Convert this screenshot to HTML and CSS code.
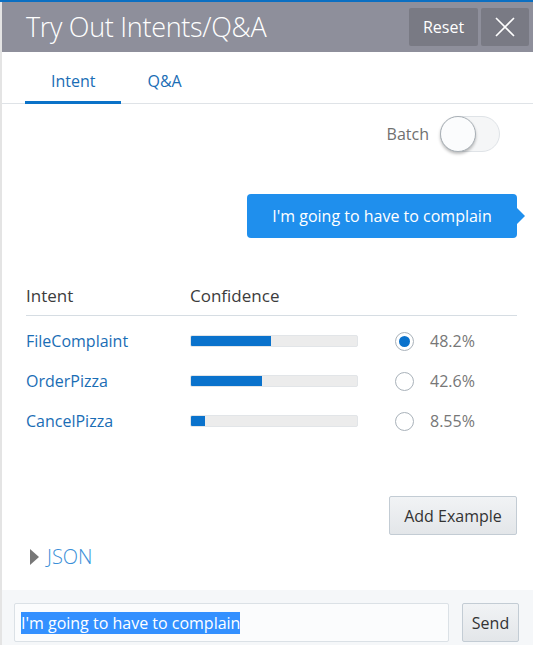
FILE: index.html
```html
<!DOCTYPE html>
<html>
<head>
<meta charset="utf-8">
<link rel="stylesheet" href="styles.css">
</head>
<body>
<div class="app">
  <div class="accent"></div>
  <div class="panel">
    <header class="header">
      <h1 class="title">Try Out Intents/Q&amp;A</h1>
      <div class="header-actions">
        <button class="hbtn reset">Reset</button>
        <button class="hbtn close" aria-label="Close">
          <svg width="22" height="22" viewBox="0 0 22 22"><path d="M2 2 L20 20 M20 2 L2 20" stroke="#fff" stroke-width="1.6" fill="none"/></svg>
        </button>
      </div>
    </header>
    <nav class="tabs">
      <div class="tab active">Intent</div>
      <div class="tab">Q&amp;A</div>
    </nav>
    <main class="content">
      <div class="batch-row">
        <span class="batch-label">Batch</span>
        <div class="toggle"><div class="knob"></div></div>
      </div>
      <div class="bubble-row">
        <div class="bubble">I'm going to have to complain</div>
      </div>
      <div class="table">
        <div class="thead">
          <div class="c-name">Intent</div>
          <div class="c-conf">Confidence</div>
        </div>
        <div class="trow">
          <div class="c-name link">FileComplaint</div>
          <div class="bar"><div class="fill" style="width:48.2%"></div></div>
          <div class="radio checked"></div>
          <div class="pct">48.2%</div>
        </div>
        <div class="trow">
          <div class="c-name link">OrderPizza</div>
          <div class="bar"><div class="fill" style="width:42.6%"></div></div>
          <div class="radio"></div>
          <div class="pct">42.6%</div>
        </div>
        <div class="trow">
          <div class="c-name link">CancelPizza</div>
          <div class="bar"><div class="fill" style="width:8.55%"></div></div>
          <div class="radio"></div>
          <div class="pct">8.55%</div>
        </div>
      </div>
      <div class="add-row">
        <button class="btn add">Add Example</button>
      </div>
      <div class="json">
        <span class="tri"></span>
        <span class="json-label">JSON</span>
      </div>
    </main>
    <footer class="footer">
      <div class="input"><span class="sel">I'm going to have to complain</span></div>
      <button class="btn send">Send</button>
    </footer>
  </div>
</div>
</body>
</html>
```
FILE: styles.css
```css
* { box-sizing: border-box; }
html, body { margin: 0; padding: 0; }
body {
  background: #e4e4e4;
  font-family: "Open Sans", "Noto Sans", sans-serif;
  color: #333;
}
.app {
  width: 533px;
  height: 645px;
  display: flex;
  flex-direction: column;
  overflow: hidden;
}
.accent { height: 2px; background: #0b6fc2; flex: none; }
.panel {
  margin-left: 2px;
  flex: 1;
  display: flex;
  flex-direction: column;
  background: #fff;
}
.header {
  height: 50px;
  background: #8e8f9b;
  display: flex;
  align-items: center;
  justify-content: space-between;
  padding: 0 4px 0 24px;
  flex: none;
}
.title {
  margin: 0 0 2px;
  font-weight: 300;
  font-size: 27px;
  color: #fff;
  letter-spacing: -0.3px;
}
.header-actions { display: flex; gap: 3px; align-self: flex-start; margin-top: 6px; }
.hbtn {
  height: 38px;
  border: none;
  border-radius: 2px;
  background: #797a84;
  color: #fff;
  font-family: inherit;
  font-size: 16px;
  padding: 0;
  display: flex;
  align-items: center;
  justify-content: center;
}
.reset { width: 69px; }
.close { width: 48px; }
.tabs {
  height: 52px;
  display: flex;
  padding-left: 23px;
  border-bottom: 1px solid #dfe3e7;
  flex: none;
}
.tab {
  padding: 0 26px;
  display: flex;
  align-items: center;
  padding-top: 8px;
  color: #1a6db5;
  font-size: 16px;
  border-bottom: 3px solid transparent;
  margin-bottom: -1px;
}
.tab.active { border-bottom-color: #0a72c8; }
.content {
  flex: 1;
  padding: 0 16px 0 24px;
  display: flex;
  flex-direction: column;
}
.batch-row {
  display: flex;
  justify-content: flex-end;
  align-items: center;
  gap: 11px;
  margin-top: 12px;
  padding-right: 17px;
}
.batch-label { color: #707070; font-size: 16px; }
.toggle {
  width: 60px;
  height: 36px;
  border-radius: 18px;
  background: #f5f6f7;
  border: 1px solid #dfe3e7;
  position: relative;
}
.knob {
  position: absolute;
  left: -1px;
  top: -1px;
  width: 36px;
  height: 36px;
  border-radius: 50%;
  background: #fbfcfd;
  border: 1px solid #a9b0b6;
  box-shadow: 0 2px 3px rgba(0,0,0,0.25);
}
.bubble-row {
  display: flex;
  justify-content: flex-end;
  margin-top: 42px;
}
.bubble {
  position: relative;
  background: #1f8fed;
  color: #fff;
  font-size: 16px;
  height: 44px;
  width: 270px;
  border-radius: 4px;
  display: flex;
  align-items: center;
  justify-content: center;
}
.bubble::after {
  content: "";
  position: absolute;
  right: -8px;
  top: 14px;
  border-left: 8px solid #1f8fed;
  border-top: 8px solid transparent;
  border-bottom: 8px solid transparent;
}
.table { margin-top: 42px; }
.thead {
  display: flex;
  height: 36px;
  align-items: flex-start;
  border-bottom: 1px solid #d6dde3;
  font-size: 17px;
  color: #3c3c3c;
  padding-top: 4px;
}
.c-name { width: 164px; flex: none; }
.trow {
  display: flex;
  align-items: center;
  height: 40px;
}
.thead + .trow { margin-top: 5px; }
.link { color: #1a6db5; font-size: 16px; }
.bar {
  width: 168px;
  height: 12px;
  background: #ececec;
  border: 1px solid #e2e5e8;
  border-radius: 2px;
  overflow: hidden;
  flex: none;
}
.fill { height: 100%; background: #0a72cc; }
.radio {
  width: 19px;
  height: 19px;
  border-radius: 50%;
  border: 1px solid #a9b2ba;
  background: #fff;
  margin-left: 37px;
  margin-right: 16px;
  flex: none;
  position: relative;
}
.radio.checked::after {
  content: "";
  position: absolute;
  left: 3px;
  top: 3px;
  width: 11px;
  height: 11px;
  border-radius: 50%;
  background: #0a72cc;
}
.pct { color: #777; font-size: 16px; }
.add-row {
  display: flex;
  justify-content: flex-end;
  margin-top: 55px;
}
.btn {
  font-family: inherit;
  font-size: 16px;
  color: #333;
  background: linear-gradient(#f1f3f5, #e3e6e9);
  border: 1px solid #c3ccd4;
  border-radius: 2px;
  padding: 0;
}
.add { width: 128px; height: 39px; }
.json {
  display: flex;
  align-items: center;
  gap: 8px;
  margin-top: 8px;
  padding-left: 4px;
}
.tri {
  width: 0;
  height: 0;
  border-left: 9px solid #777;
  border-top: 8px solid transparent;
  border-bottom: 8px solid transparent;
}
.json-label { color: #3a8fd8; font-size: 20px; font-weight: 300; }
.footer {
  height: 55px;
  background: #f5f7f9;
  display: flex;
  align-items: flex-start;
  padding: 13px 14px 0 12px;
  gap: 13px;
  flex: none;
}
.input {
  flex: 1;
  height: 39px;
  background: #fbfcfd;
  border: 1px solid #dbe1e6;
  border-radius: 2px;
  display: flex;
  align-items: center;
  padding-left: 6px;
  font-size: 16px;
}
.sel { background: #3390ff; color: #fff; line-height: 22px; }
.send { width: 57px; height: 39px; }
```
